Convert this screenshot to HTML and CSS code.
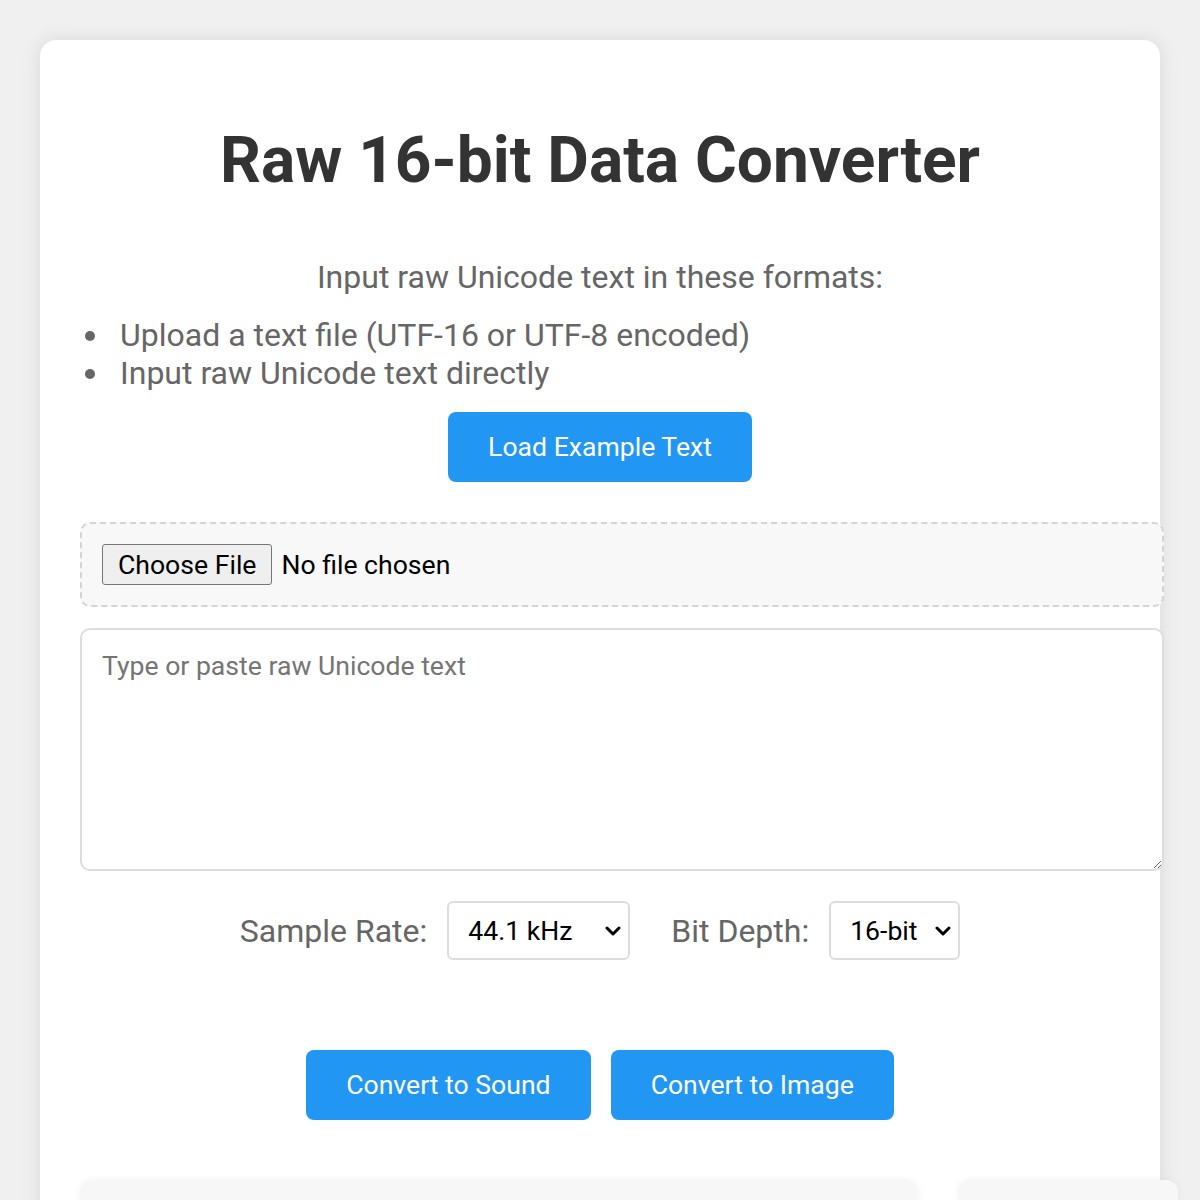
FILE: index.html
```html
<!DOCTYPE html>
<html lang="en">
<head>
  <meta charset="UTF-8">
  <meta name="viewport" content="width=device-width, initial-scale=1.0">
  <title>Raw 16-bit Data Converter</title>
  <link rel="stylesheet" href="styles.css">
</head>
<body>

<div class="container">
  <h1>Raw 16-bit Data Converter</h1>

  <p class="intro">Input raw Unicode text in these formats:</p>
  <ul class="formats">
    <li>Upload a text file (UTF-16 or UTF-8 encoded)</li>
    <li>Input raw Unicode text directly</li>
  </ul>

  <div class="center">
    <button class="btn" onclick="loadExample()">Load Example Text</button>
  </div>

  <div class="file-zone">
    <input type="file" id="file-input" accept=".txt">
  </div>

  <textarea id="text-input" placeholder="Type or paste raw Unicode text"></textarea>

  <div class="controls">
    <div class="control">
      <label for="sample-rate">Sample Rate:</label>
      <span class="select-wrap">
        <select id="sample-rate">
          <option>8 kHz</option>
          <option>22.05 kHz</option>
          <option selected>44.1 kHz</option>
          <option>48 kHz</option>
        </select>
        <svg class="chevron" width="16" height="10" viewBox="0 0 16 10"><polyline points="2,2 8,8 14,2" fill="none" stroke="#000" stroke-width="3" stroke-linecap="round" stroke-linejoin="round"/></svg>
      </span>
    </div>
    <div class="control">
      <label for="bit-depth">Bit Depth:</label>
      <span class="select-wrap">
        <select id="bit-depth">
          <option>8-bit</option>
          <option selected>16-bit</option>
        </select>
        <svg class="chevron" width="16" height="10" viewBox="0 0 16 10"><polyline points="2,2 8,8 14,2" fill="none" stroke="#000" stroke-width="3" stroke-linecap="round" stroke-linejoin="round"/></svg>
      </span>
    </div>
  </div>

  <div class="actions">
    <button class="btn">Convert to Sound</button>
    <button class="btn">Convert to Image</button>
  </div>

  <div class="output">
    <div class="panel panel-main"></div>
    <div class="panel panel-side"></div>
  </div>
</div>

<script>
  // Put some sample text in the box
  function loadExample() {
    document.getElementById('text-input').value = 'Hello, 世界! \u266A\u266B \u2603 \u03A9';
  }
</script>

</body>
</html>
```

FILE: styles.css
```css
body {
  font-family: Roboto, "Liberation Sans", Arial, sans-serif;
  margin: 0;
  padding: 40px;
  background-color: #f0f0f0;
}
.container {
  max-width: 1040px;
  margin: 0 auto;
  padding: 40px 40px 0;
  background-color: #fff;
  border-radius: 16px;
  box-shadow: 0 0 20px rgba(0, 0, 0, 0.1);
  min-height: 1200px;
}
h1 {
  margin: 43px 0 60px;
  font-size: 64px;
  line-height: 75px;
  color: #333;
  text-align: center;
}
.intro {
  margin: 0;
  font-size: 32px;
  line-height: 38px;
  color: #666;
  text-align: center;
}
.formats {
  margin: 20px 0 0;
  padding-left: 32px;
  font-size: 32px;
  line-height: 38px;
  color: #666;
}
.formats li {
  padding-left: 8px;
}
.center {
  text-align: center;
  margin-top: 20px;
}
.btn {
  padding: 19px 40px;
  font-family: inherit;
  font-size: 26.6px;
  line-height: 32px;
  background-color: #2196f3;
  color: #fff;
  border: none;
  border-radius: 8px;
  cursor: pointer;
}
.file-zone {
  display: flex;
  align-items: center;
  width: 100%;
  height: 41px;
  margin-top: 40px;
  padding: 20px;
  background-color: #f8f8f8;
  border: 2px dashed #d4d4d4;
  border-radius: 10px;
}
.file-zone input {
  font-family: inherit;
  font-size: 26.6px;
}
.file-zone input::file-selector-button {
  margin-right: 9px;
  padding: 4px 15px;
  font-family: inherit;
  font-size: 26.6px;
  background-color: #efefef;
  border: 1px solid #767676;
  border-radius: 3px;
}
textarea {
  display: block;
  width: 100%;
  height: 199px;
  margin-top: 21px;
  padding: 20px;
  font-family: inherit;
  font-size: 26.6px;
  border: 2px solid #ddd;
  border-radius: 10px;
  resize: vertical;
}
.controls {
  display: flex;
  justify-content: center;
  gap: 41px;
  margin-top: 30px;
}
.control {
  display: flex;
  align-items: center;
  gap: 20px;
}
.control label {
  font-size: 32px;
  color: #666;
}
.select-wrap {
  position: relative;
  display: inline-block;
}
select {
  display: block;
  appearance: none;
  -webkit-appearance: none;
  padding: 12px 40px 12px 19px;
  font-family: inherit;
  font-size: 26.6px;
  color: #000;
  background-color: #fff;
  border: 2px solid #ddd;
  border-radius: 6px;
}
.chevron {
  position: absolute;
  right: 9px;
  top: 50%;
  margin-top: -5px;
  pointer-events: none;
}
.actions {
  display: flex;
  justify-content: center;
  gap: 20px;
  margin-top: 90px;
}
.output {
  display: flex;
  gap: 40px;
  margin-top: 60px;
}
.panel {
  height: 300px;
  background-color: #f7f7f7;
  border-radius: 12px;
  box-shadow: 0 0 8px rgba(0, 0, 0, 0.05);
}
.panel-main {
  flex: 0 0 838px;
}
.panel-side {
  flex: 0 0 220px;
}
```
